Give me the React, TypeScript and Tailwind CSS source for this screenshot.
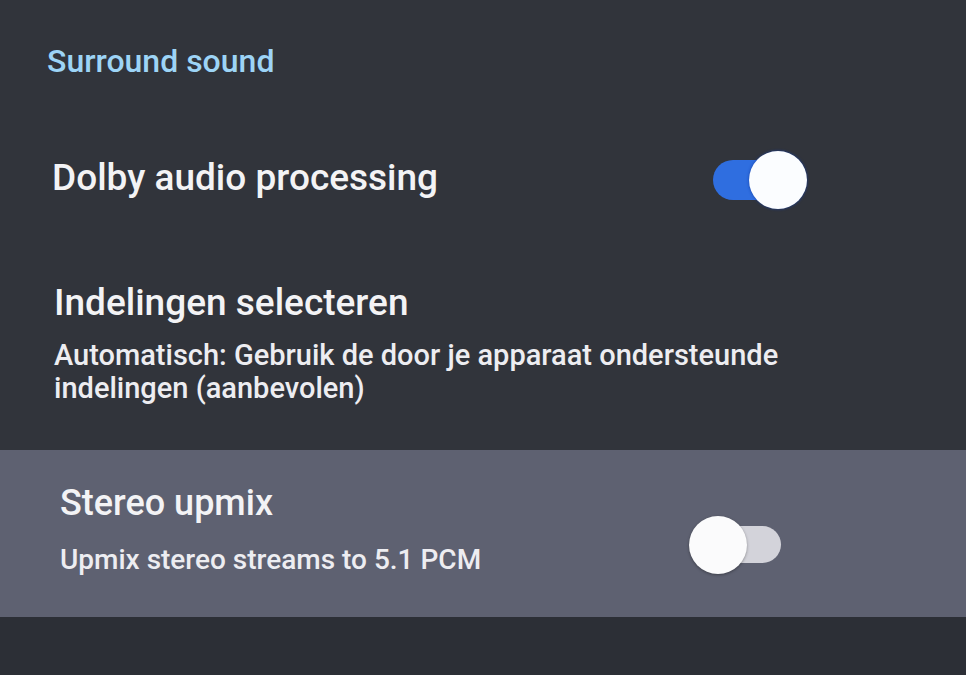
import React from "react";

function Toggle({ on }: { on: boolean }) {
  if (on) {
    return (
      <div className="relative w-[94px] h-[58px] shrink-0">
        <div className="absolute left-0 top-[9px] w-[80px] h-[40px] rounded-full bg-[#2f6ee0]" />
        <div className="absolute right-0 top-0 w-[58px] h-[58px] rounded-full bg-[#fbfdff] shadow-[0_0_3px_rgba(20,60,160,0.9)]" />
      </div>
    );
  }
  return (
    <div className="relative w-[92px] h-[58px] shrink-0">
      <div className="absolute right-0 top-[10px] w-[70px] h-[37px] rounded-full bg-[#d3d3da]" />
      <div className="absolute left-0 top-0 w-[58px] h-[58px] rounded-full bg-[#fbfbfc] shadow-[0_1px_3px_rgba(0,0,0,0.35)]" />
    </div>
  );
}

export default function App() {
  return (
    <div className="w-[966px] h-[675px] overflow-hidden bg-[#31343b] flex flex-col font-['Roboto',sans-serif] text-[#f3f3f5]">
      <div className="pl-[47px] pt-[45px] text-[32px] leading-none font-medium text-[#9dd4f6]">
        Surround sound
      </div>

      <div className="mt-[74px] flex items-start pl-[52px] pr-[159px]">
        <div className="mt-[8px] flex-1 text-[37px] leading-none font-medium">Dolby audio processing</div>
        <Toggle on={true} />
      </div>

      <div className="mt-[75px] pl-[54px]">
        <div className="text-[37px] leading-none font-medium">Indelingen selecteren</div>
        <div className="mt-[18px] text-[29px] leading-[33px] font-medium text-[#ededf1] whitespace-nowrap">
          Automatisch: Gebruik de door je apparaat ondersteunde
          <br />
          indelingen (aanbevolen)
        </div>
      </div>

      <div className="mt-[45px] h-[167px] bg-[#5e6171] flex items-start pl-[60px] pr-[185px] pt-[35px]">
        <div className="flex-1">
          <div className="text-[36px] leading-none font-medium">Stereo upmix</div>
          <div className="mt-[21px] text-[28px] leading-[35px] font-medium text-[#ededf1] whitespace-nowrap">
            Upmix stereo streams to 5.1 PCM
          </div>
        </div>
        <div className="mt-[31px]">
          <Toggle on={false} />
        </div>
      </div>

      <div className="flex-1 bg-[#2c2f36]" />
    </div>
  );
}
